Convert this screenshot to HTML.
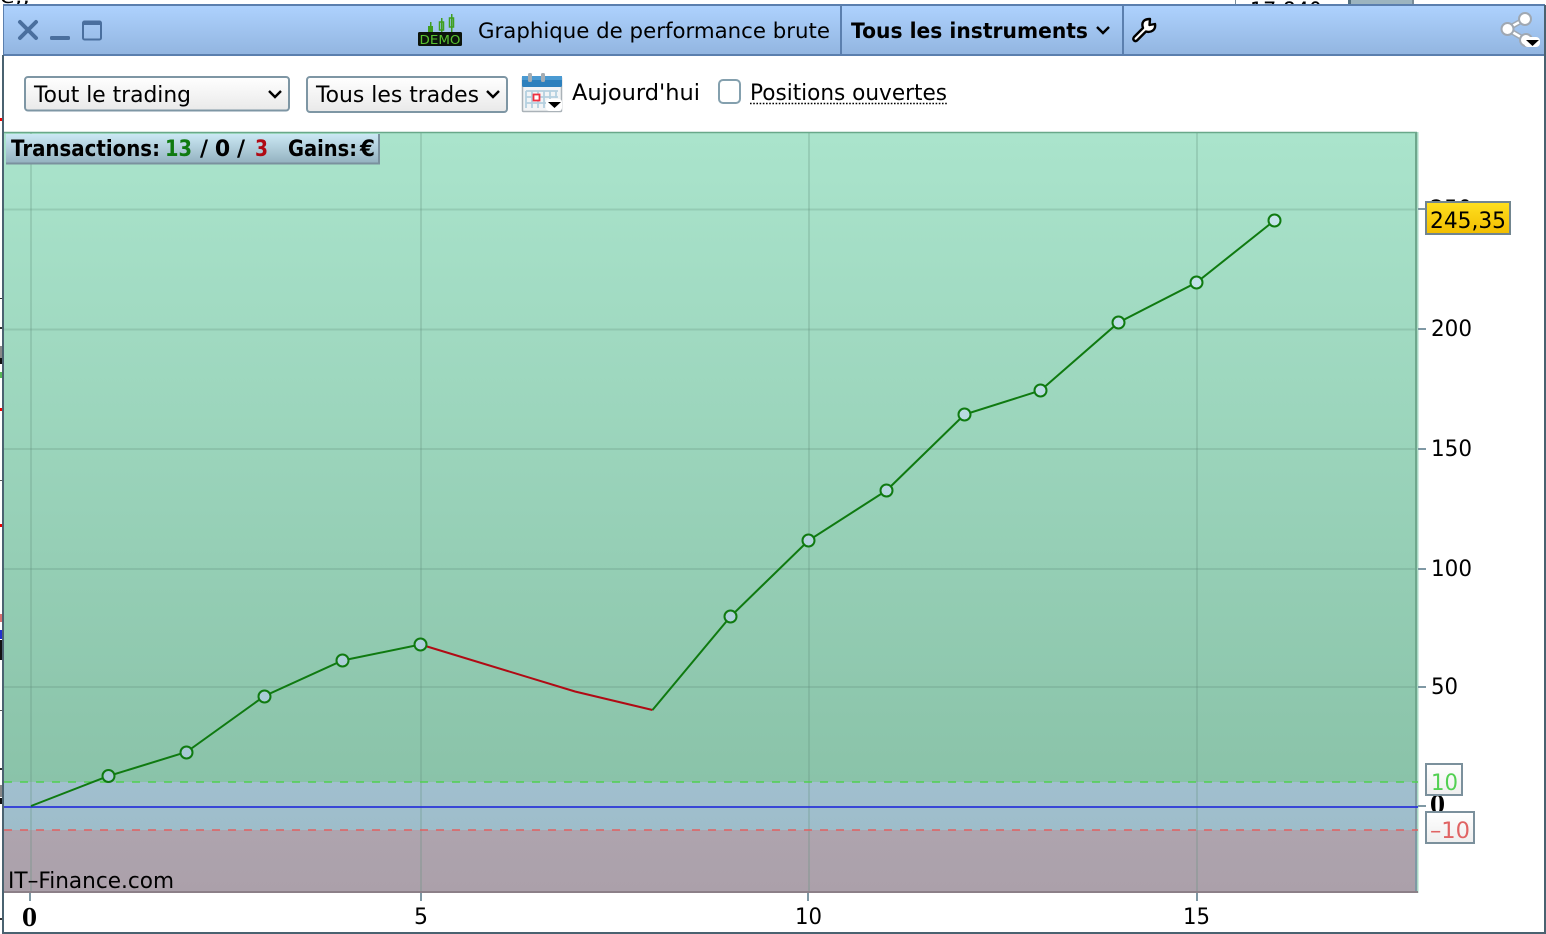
<!DOCTYPE html>
<html><head><meta charset="utf-8"><style>
html,body{margin:0;padding:0;background:#fff;width:1546px;height:934px;overflow:hidden}
svg{display:block;position:absolute;left:0;top:0}
text{font-family:"DejaVu Sans","Liberation Sans",sans-serif;fill:#000}
</style></head><body>
<svg width="1546" height="934" viewBox="0 0 1546 934" xmlns="http://www.w3.org/2000/svg">
<defs>
<linearGradient id="tb" x1="0" y1="0" x2="0" y2="1"><stop offset="0" stop-color="#aed2fe"/><stop offset="1" stop-color="#92b5e0"/></linearGradient>
<linearGradient id="pl" x1="0" y1="0" x2="0" y2="1"><stop offset="0" stop-color="#aae4cc"/><stop offset="1" stop-color="#8ac3a9"/></linearGradient>
<linearGradient id="z2" x1="0" y1="0" x2="0" y2="1"><stop offset="0" stop-color="#a1bfcf"/><stop offset="1" stop-color="#9ebdca"/></linearGradient>
<linearGradient id="z3" x1="0" y1="0" x2="0" y2="1"><stop offset="0" stop-color="#aea4ae"/><stop offset="1" stop-color="#aba0aa"/></linearGradient>
<linearGradient id="sel" x1="0" y1="0" x2="0" y2="1"><stop offset="0" stop-color="#ffffff"/><stop offset="1" stop-color="#e9e9e9"/></linearGradient>
<linearGradient id="st" x1="0" y1="0" x2="0" y2="1"><stop offset="0" stop-color="#cbe8f4"/><stop offset="1" stop-color="#94b2c0"/></linearGradient>
<linearGradient id="yl" x1="0" y1="0" x2="0" y2="1"><stop offset="0" stop-color="#ffe020"/><stop offset="1" stop-color="#f2bd00"/></linearGradient>
<linearGradient id="wh" x1="0" y1="0" x2="0" y2="1"><stop offset="0" stop-color="#ffffff"/><stop offset="1" stop-color="#eeeeee"/></linearGradient>
<linearGradient id="mk" gradientUnits="userSpaceOnUse" x1="0" y1="220" x2="0" y2="776"><stop offset="0" stop-color="#c4e4ea"/><stop offset="1" stop-color="#a6c9d4"/></linearGradient>
</defs>

<!-- bits of window behind -->
<rect x="0" y="0" width="1546" height="4" fill="#fff"/>
<text x="0" y="3" font-size="20" textLength="30" lengthAdjust="spacingAndGlyphs">e,,</text>
<rect x="1235" y="0" width="1" height="4" fill="#7a8c98"/>
<text x="1250" y="18" font-size="22" textLength="72" lengthAdjust="spacingAndGlyphs">17 840</text>
<rect x="1348" y="0" width="66" height="4" fill="#9cb4bf"/>
<rect x="1348" y="0" width="3" height="4" fill="#54707f"/>
<rect x="1412" y="0" width="2" height="4" fill="#7a8c98"/>
<rect x="0" y="118" width="3" height="3" fill="#e00"/>
<rect x="0" y="298" width="3" height="1" fill="#333"/>
<rect x="0" y="327" width="3" height="2" fill="#333"/>
<rect x="0" y="346" width="3" height="12" fill="#888"/>
<rect x="0" y="358" width="3" height="6" fill="#111"/>
<rect x="0" y="372" width="3" height="6" fill="#58b858"/>
<rect x="0" y="408" width="3" height="3" fill="#e00"/>
<rect x="0" y="480" width="3" height="1" fill="#555"/>
<rect x="0" y="524" width="3" height="3" fill="#e00"/>
<rect x="0" y="614" width="3" height="8" fill="#d87070"/>
<rect x="0" y="630" width="3" height="9" fill="#2030d0"/>
<rect x="0" y="640" width="2" height="20" fill="#111"/>
<rect x="0" y="710" width="3" height="1" fill="#555"/>
<rect x="0" y="768" width="3" height="2" fill="#333"/>
<rect x="0" y="785" width="3" height="12" fill="#888"/>
<rect x="0" y="798" width="3" height="6" fill="#111"/>
<rect x="0" y="918" width="3" height="2" fill="#333"/>

<!-- window -->
<rect x="3" y="4" width="1542" height="930" fill="#fff"/>
<rect x="3" y="5" width="1542" height="50" fill="url(#tb)"/>
<rect x="3" y="4" width="1542" height="2" fill="#5b7fae"/>
<rect x="3" y="54" width="1542" height="2" fill="#5b7fae"/>
<rect x="2" y="55" width="2" height="879" fill="#4a6270"/>
<rect x="1544" y="5" width="2" height="929" fill="#4a6270"/>
<rect x="2" y="932" width="1544" height="2" fill="#4a6270"/>
<rect x="3" y="4" width="1" height="51" fill="#5b7fae"/>
<rect x="840" y="5" width="2" height="50" fill="#5b7fae"/>
<rect x="1122" y="5" width="2" height="50" fill="#5b7fae"/>

<!-- title bar icons -->
<path d="M20 22 L36 38 M36 22 L20 38" stroke="#4a6f9e" stroke-width="4" fill="none" stroke-linecap="round"/>
<rect x="50" y="36" width="20" height="4" rx="1.500" fill="#4a6f9e"/>
<rect x="83" y="21.500" width="18" height="18" rx="1.500" fill="none" stroke="#4a6f9e" stroke-width="2"/>
<rect x="83" y="21" width="18" height="4" fill="#4a6f9e"/>

<!-- DEMO icon -->
<rect x="418" y="32" width="44" height="14" rx="1.500" fill="#0c140c"/>
<text x="419.500" y="44" font-size="12.500" font-weight="normal" style="fill:#58c030" textLength="41" lengthAdjust="spacingAndGlyphs">DEMO</text>
<rect x="428" y="26" width="5" height="6" fill="#3f9f1f"/><rect x="430" y="22" width="1.500" height="5" fill="#3f9f1f"/>
<rect x="439.500" y="22" width="4" height="8" fill="none" stroke="#3f9f1f" stroke-width="1.500"/><rect x="441" y="18" width="1.500" height="14" fill="#3f9f1f"/>
<rect x="449.500" y="18" width="4" height="9" fill="none" stroke="#3f9f1f" stroke-width="1.500"/><rect x="451" y="14" width="1.500" height="18" fill="#3f9f1f"/>

<text x="478" y="38" font-size="21.500" textLength="352" lengthAdjust="spacingAndGlyphs">Graphique de performance brute</text>
<text x="851" y="38" font-size="21.500" font-weight="bold" textLength="237" lengthAdjust="spacingAndGlyphs">Tous les instruments</text>
<path d="M1097 27 L1103 33 L1109 27" stroke="#000" stroke-width="2.400" fill="none"/>

<!-- wrench -->
<path d="M1134 37 L1143 28 C1141 22 1144 19 1150 19 L1149.500 25 L1155 24 C1156 30 1151 33 1146 31.500 L1137 40.500 C1135 42 1132 40 1134 37 Z" fill="#fff" stroke="#000" stroke-width="2.400" stroke-linejoin="round"/>

<!-- share -->
<path d="M1525 19 L1507 29 L1526 40" stroke="#a0a8b2" stroke-width="5.500" fill="none"/>
<path d="M1525 19 L1507 29 L1526 40" stroke="#fff" stroke-width="2.500" fill="none"/>
<circle cx="1525" cy="19" r="6" fill="#fff" stroke="#a0a8b2" stroke-width="2"/>
<circle cx="1507.500" cy="29" r="6" fill="#fff" stroke="#a0a8b2" stroke-width="2"/>
<circle cx="1526" cy="40" r="6" fill="#fff" stroke="#a0a8b2" stroke-width="2"/>
<rect x="1524" y="37" width="16" height="10" rx="4" fill="#fff"/>
<path d="M1526 40 H1539 L1532.500 46 Z" fill="#000"/>

<!-- toolbar -->
<rect x="25" y="77" width="264" height="33.500" rx="3" fill="url(#sel)" stroke="#7e96a4" stroke-width="2"/>
<text x="34" y="102" font-size="22" textLength="157" lengthAdjust="spacingAndGlyphs">Tout le trading</text>
<path d="M269 91 L275 97 L281 91" stroke="#000" stroke-width="2.400" fill="none"/>
<rect x="307" y="77" width="200" height="35" rx="3" fill="url(#sel)" stroke="#7e96a4" stroke-width="2"/>
<text x="316" y="102" font-size="22" textLength="163" lengthAdjust="spacingAndGlyphs">Tous les trades</text>
<path d="M487 91 L493 97 L499 91" stroke="#000" stroke-width="2.400" fill="none"/>

<!-- calendar -->
<rect x="522.500" y="77" width="39" height="34.500" rx="1" fill="#f2f4f6" stroke="#aab2b8" stroke-width="1.500"/>
<rect x="522" y="76" width="40" height="11" rx="1.500" fill="#2d80bd"/>
<rect x="522" y="76" width="40" height="4" fill="#4a9ad2"/>
<rect x="528" y="73" width="4" height="9" rx="1.500" fill="#a5adb3"/>
<rect x="541" y="73" width="4" height="9" rx="1.500" fill="#a5adb3"/>
<path d="M526 91 H558 M526 97 H558 M526 103 H552 M526 91 V108 M532 91 V108 M538 91 V108 M544 91 V108 M550 91 V106 M556 91 V98" stroke="#b4d0e0" stroke-width="1.800" fill="none"/>
<rect x="533.500" y="94.500" width="6" height="6" fill="#fff" stroke="#f03040" stroke-width="1.800"/>
<rect x="546" y="99" width="16" height="12" rx="3" fill="#fff"/>
<path d="M548 102 H561 L554.500 108 Z" fill="#000"/>

<text x="572" y="100" font-size="22" textLength="128" lengthAdjust="spacingAndGlyphs">Aujourd'hui</text>
<rect x="719" y="80" width="21" height="23" rx="4" fill="#fff" stroke="#84a0ae" stroke-width="2"/>
<text x="750" y="100" font-size="22" textLength="197" lengthAdjust="spacingAndGlyphs">Positions ouvertes</text>
<path d="M750 103.500 H947" stroke="#000" stroke-width="1.600" stroke-dasharray="1.600 1.600" fill="none"/>

<!-- plot -->
<rect x="4" y="132" width="1413" height="650" fill="url(#pl)"/>
<rect x="4" y="782" width="1413" height="48" fill="url(#z2)"/>
<rect x="4" y="830" width="1413" height="63" fill="url(#z3)"/>

<g stroke="#5f8f7c" stroke-opacity=".26" stroke-width="2" fill="none">
<path d="M4 209.500 H1416 M4 329.500 H1416 M4 449 H1416 M4 569 H1416 M4 687 H1416"/>
<path d="M31 133 V892 M421 133 V892 M809 133 V892 M1197 133 V892"/>
</g>
<path d="M4 132.500 H1417" stroke="#69a88a" stroke-width="1.400" fill="none"/>
<path d="M1416 132 V782" stroke="#6ea68c" stroke-width="2" fill="none"/>
<rect x="1417" y="132" width="1.500" height="761" fill="#a8d8c4"/>
<path d="M1416 782 V892" stroke="#7f98a4" stroke-width="2" fill="none"/>
<path d="M4 892 H1418" stroke="#8c8088" stroke-width="2" fill="none"/>

<!-- threshold lines -->
<path d="M4 782 H1418" stroke="#50d050" stroke-width="1.600" stroke-dasharray="8 8" fill="none"/>
<path d="M4 830 H1418" stroke="#e06060" stroke-width="1.600" stroke-dasharray="8 8" fill="none"/>
<path d="M4 807 H1418" stroke="#2a34d8" stroke-width="1.800" fill="none"/>

<!-- series -->
<path d="M31 806 L108.500 776 L186.500 752 L264.500 696 L342.500 660.500 L420.500 644.500" stroke="#0f7a10" stroke-width="2" fill="none"/>
<path d="M420.500 644.500 L575 691.500 L652.500 710" stroke="#b00a14" stroke-width="2" fill="none"/>
<path d="M652.500 710 L730.500 616.500 L808.500 540.500 L886.500 490.500 L964.500 414.500 L1040.500 390.500 L1118.500 322.500 L1196.500 282.500 L1274.500 220.500" stroke="#0f7a10" stroke-width="2" fill="none"/>
<g stroke="#0f7a10" stroke-width="2" fill="url(#mk)">
<circle cx="108.500" cy="776" r="6"/><circle cx="186.500" cy="752.500" r="6"/><circle cx="264.500" cy="696.500" r="6"/>
<circle cx="342.500" cy="660.500" r="6"/><circle cx="420.500" cy="644.500" r="6"/><circle cx="730.500" cy="616.500" r="6"/>
<circle cx="808.500" cy="540.500" r="6"/><circle cx="886.500" cy="490.500" r="6"/><circle cx="964.500" cy="414.500" r="6"/>
<circle cx="1040.500" cy="390.500" r="6"/><circle cx="1118.500" cy="322.500" r="6"/><circle cx="1196.500" cy="282.500" r="6"/>
<circle cx="1274.500" cy="220.500" r="6"/>
</g>

<!-- status label -->
<rect x="6" y="134" width="373" height="29" fill="url(#st)"/>
<path d="M379 134 V163.500 H6" stroke="#7a919e" stroke-width="2" fill="none"/>
<text x="11" y="156" font-size="22" font-weight="bold" textLength="149" lengthAdjust="spacingAndGlyphs">Transactions:</text>
<text x="165" y="156" font-size="22" font-weight="bold" style="fill:#0f7a10" textLength="27" lengthAdjust="spacingAndGlyphs">13</text>
<text x="200" y="156" font-size="22" font-weight="bold" textLength="45">/ 0 /</text>
<text x="255" y="156" font-size="22" font-weight="bold" style="fill:#b00a14" textLength="13" lengthAdjust="spacingAndGlyphs">3</text>
<text x="288" y="156" font-size="22" font-weight="bold" textLength="69" lengthAdjust="spacingAndGlyphs">Gains:</text>
<text x="360" y="156" font-size="22" font-weight="bold" textLength="15" lengthAdjust="spacingAndGlyphs">€</text>

<text x="8" y="888" font-size="22" textLength="166" lengthAdjust="spacingAndGlyphs">IT–Finance.com</text>

<!-- ticks -->
<g stroke="#7f98a4" stroke-width="2" fill="none">
<path d="M1418 209 H1426 M1418 329 H1426 M1418 449 H1426 M1418 569 H1426 M1418 687 H1426 M1418 806 H1426"/>
<path d="M30 893 V901 M421 893 V901 M808 893 V901 M1197 893 V901"/>
</g>

<!-- y labels -->
<text x="1430" y="216" font-size="22" textLength="42" lengthAdjust="spacingAndGlyphs">250</text>
<text x="1431" y="336" font-size="22" textLength="41" lengthAdjust="spacingAndGlyphs">200</text>
<text x="1431" y="456" font-size="22" textLength="41" lengthAdjust="spacingAndGlyphs">150</text>
<text x="1431" y="576" font-size="22" textLength="41" lengthAdjust="spacingAndGlyphs">100</text>
<text x="1431" y="694" font-size="22" textLength="27" lengthAdjust="spacingAndGlyphs">50</text>
<text x="1430" y="813" font-size="24" font-weight="bold" style="font-family:'DejaVu Serif','Liberation Serif',serif" textLength="15" lengthAdjust="spacingAndGlyphs">0</text>

<!-- x labels -->
<text x="22" y="926" font-size="24" font-weight="bold" style="font-family:'DejaVu Serif','Liberation Serif',serif" textLength="15" lengthAdjust="spacingAndGlyphs">0</text>
<text x="414" y="924" font-size="22" textLength="14" lengthAdjust="spacingAndGlyphs">5</text>
<text x="795" y="924" font-size="22" textLength="27" lengthAdjust="spacingAndGlyphs">10</text>
<text x="1183" y="924" font-size="22" textLength="27" lengthAdjust="spacingAndGlyphs">15</text>

<!-- value badges -->
<rect x="1426" y="202" width="84" height="32" fill="url(#yl)" stroke="#71858f" stroke-width="2"/>
<text x="1430" y="228" font-size="22" textLength="76" lengthAdjust="spacingAndGlyphs">245,35</text>
<rect x="1426" y="764" width="36" height="31" fill="url(#wh)" stroke="#7b909c" stroke-width="2"/>
<text x="1431" y="790" font-size="22" style="fill:#52d052" textLength="27" lengthAdjust="spacingAndGlyphs">10</text>
<rect x="1426" y="812" width="48" height="31" fill="url(#wh)" stroke="#7b909c" stroke-width="2"/>
<text x="1430" y="838" font-size="22" style="fill:#e06464" textLength="40" lengthAdjust="spacingAndGlyphs">–10</text>
</svg>
</body></html>
